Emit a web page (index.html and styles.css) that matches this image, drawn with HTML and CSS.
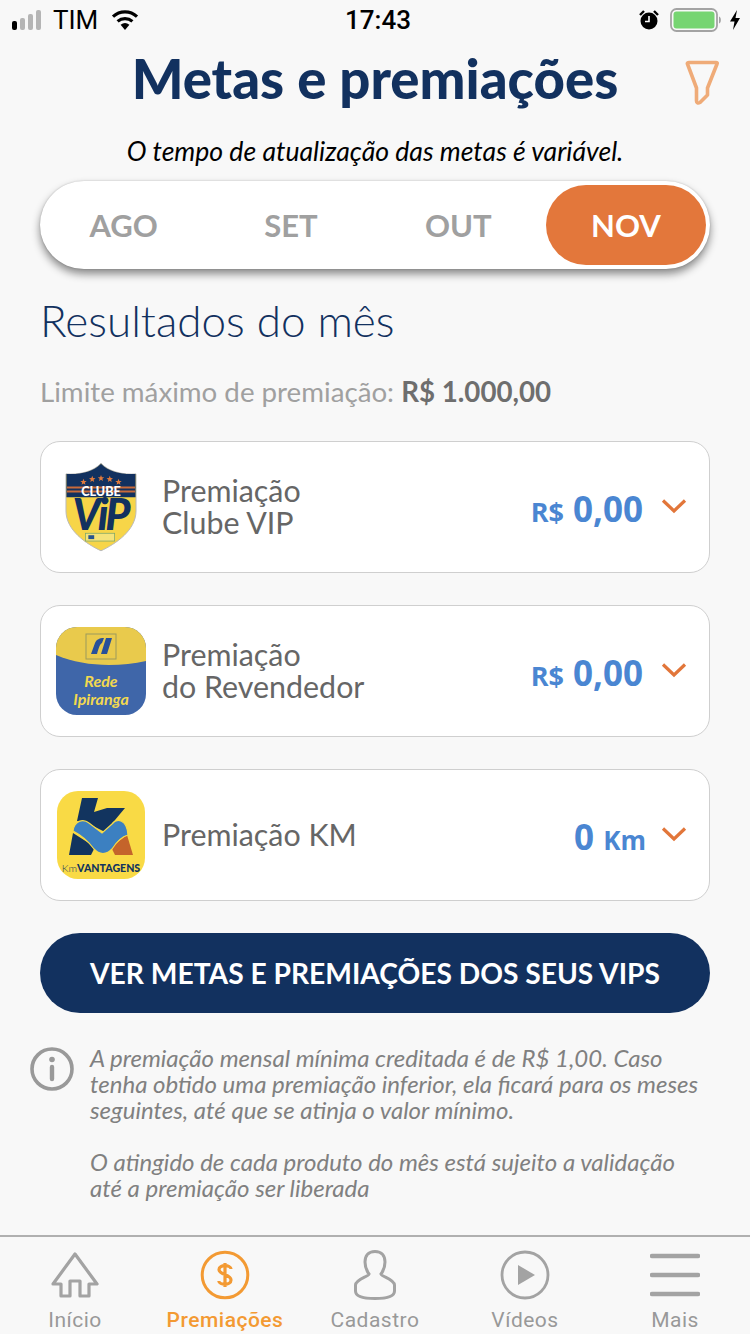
FILE: index.html
```html
<!DOCTYPE html>
<html lang="pt-BR">
<head>
    <meta charset="UTF-8">
    <meta name="viewport" content="width=device-width, initial-scale=1.0">
    <title>Metas e premiações</title>
    <link rel="stylesheet" href="styles.css">
</head>
<body>
    <div class="screen">
        <!-- Barra de status -->
        <div class="status-bar">
            <div class="status-left">
                <span class="signal"><i class="on"></i><i></i><i></i><i></i></span>
                <span class="carrier">TIM</span>
                <svg class="wifi" width="28" height="22" viewBox="0 0 28 22">
                    <path d="M14 21 L9.6 15.8 A7 7 0 0 1 18.4 15.8 Z" fill="#000"/>
                    <path d="M6.6 12.4 A11.4 11.4 0 0 1 21.4 12.4" fill="none" stroke="#000" stroke-width="3.2"/>
                    <path d="M2 7.6 A17.6 17.6 0 0 1 26 7.6" fill="none" stroke="#000" stroke-width="3.2"/>
                </svg>
            </div>
            <div class="status-time">17:43</div>
            <div class="status-right">
                <svg width="20" height="22" viewBox="0 0 20 22">
                    <circle cx="10" cy="12" r="8.5" fill="#000"/>
                    <path d="M10 7 V12.5 H6" fill="none" stroke="#fff" stroke-width="1.6"/>
                    <path d="M1 6 L5 2 M19 6 L15 2" stroke="#000" stroke-width="2.4"/>
                </svg>
                <svg class="battery" width="52" height="24" viewBox="0 0 52 24">
                    <rect x="1" y="1" width="46" height="22" rx="5.500" fill="none" stroke="#a3a3a3" stroke-width="1.800"/>
                    <rect x="3.500" y="3.500" width="41" height="17" rx="3" fill="#76d572"/>
                    <path d="M49 8.500 C51.500 9 51.500 15 49 15.500 Z" fill="#a3a3a3"/>
                </svg>
                <svg class="bolt" width="12" height="20" viewBox="0 0 12 20">
                    <path d="M8 0 L1 11.500 H5.500 L4 20 L11 8 H6.500 Z" fill="#000"/>
                </svg>
            </div>
        </div>

        <div class="content">
            <div class="page-head">
                <h1>Metas e premiações</h1>
                <svg class="filter-icon" width="34" height="46" viewBox="0 0 34 46">
                    <path d="M2.500 4 C2 3 3 2.500 4 2.500 H31 C32 2.500 32.500 3 32 4 L22.500 28 V35 L15 42.500 C13 43.500 11.500 43 11.500 41 V28 Z" fill="none" stroke="#efab78" stroke-width="3.600" stroke-linejoin="round"/>
                </svg>
            </div>
            <p class="notice">O tempo de atualização das metas é variável.</p>

            <!-- Seletor de mês -->
            <div class="months">
                <div class="month">AGO</div>
                <div class="month">SET</div>
                <div class="month">OUT</div>
                <div class="month active">NOV</div>
            </div>

            <h2>Resultados do mês</h2>
            <p class="limit">Limite máximo de premiação: <b>R$ 1.000,00</b></p>

            <div class="card">
                <div class="card-logo">
                    <svg width="72" height="92" viewBox="0 0 74 92">
                        <path d="M1 12 C14 13 29 10 37 1 C45 10 60 13 73 12 V50 C73 70 52 84 37 91 C22 84 1 70 1 50 Z" fill="#f7d548" stroke="#b9b9b9" stroke-width="1"/>
                        <path d="M1.500 12 C14 13 29 10 37 1.500 C45 10 60 13 72.500 12 V36 H1.500 Z" fill="#12315f"/>
                        <path d="M2 26 H72 M2 30 H72" stroke="#c86a3a" stroke-width="2"/>
                        <g fill="#e17a3c">
                            <path id="star" d="M19 17 L19.900 19.300 L22.300 19.400 L20.400 20.900 L21 23.200 L19 21.900 L17 23.200 L17.600 20.900 L15.700 19.400 L18.100 19.300 Z"/>
                            <use href="#star" x="9" y="-3"/>
                            <use href="#star" x="18" y="-4"/>
                            <use href="#star" x="27" y="-3"/>
                            <use href="#star" x="36" y="0"/>
                        </g>
                        <text x="37" y="35" class="logo-clube">CLUBE</text>
                        <text x="36" y="70" class="logo-vip">ViP</text>
                        <rect x="21" y="73" width="30" height="8" fill="#f5e37a" stroke="#7fa86a" stroke-width="0.800"/>
                        <rect x="24" y="75" width="6" height="4" fill="#27548f"/>
                    </svg>
                </div>
                <div class="card-title">Premiação<br>Clube VIP</div>
                <div class="card-value"><small>R$</small> 0,00</div>
                <svg class="chevron" width="26" height="16" viewBox="0 0 26 16"><path d="M2 2.500 L13 13 L24 2.500" fill="none" stroke="#e2763a" stroke-width="3.200"/></svg>
            </div>

            <div class="card">
                <div class="card-logo">
                    <svg width="90" height="88" viewBox="0 0 90 88">
                        <rect width="90" height="88" rx="21" fill="#3f66a9"/>
                        <path d="M0 28 V21 A21 21 0 0 1 21 0 H69 A21 21 0 0 1 90 21 V34 C62 40 28 40 0 28 Z" fill="#e9ca4c"/>
                        <rect x="30" y="7" width="30" height="25" fill="none" stroke="#9c9a5c" stroke-width="1"/>
                        <path d="M35 27 L39 16 C40 13 43 11 48 11 L46 16 C44 17 43 20 41 27 Z M45 27 L50 11 H56 L51 27 Z" fill="#27509a"/>
                        <text x="45" y="60" class="logo-rede">Rede</text>
                        <text x="45" y="78" class="logo-rede">Ipiranga</text>
                    </svg>
                </div>
                <div class="card-title">Premiação<br>do Revendedor</div>
                <div class="card-value"><small>R$</small> 0,00</div>
                <svg class="chevron" width="26" height="16" viewBox="0 0 26 16"><path d="M2 2.500 L13 13 L24 2.500" fill="none" stroke="#e2763a" stroke-width="3.200"/></svg>
            </div>

            <div class="card">
                <div class="card-logo">
                    <svg width="88" height="88" viewBox="0 0 88 88">
                        <rect width="88" height="88" rx="21" fill="#f9da45"/>
                        <path d="M25 7 H41 L37 21 L50 17 H68 L48 41 L30 32 L20 30 Z M16 42 L12 64 H34 L38 56 Z" fill="#12345f"/>
                        <path d="M70 44 L76 64 H58 L54 56 Z" fill="#c4642b"/>
                        <path d="M16 40 C17 30 26 27 32 32 L45 42 L55 33 C60 27 70 28 71 44 C64 46 60 50 55 58 C50 64 42 64 37 58 C31 50 24 44 16 40 Z" fill="#3c80c1" stroke="#f9da45" stroke-width="1.200"/>
                        <text x="44" y="81" class="logo-km"><tspan class="logo-km-thin">Km</tspan>VANTAGENS</text>
                    </svg>
                </div>
                <div class="card-title">Premiação KM</div>
                <div class="card-value km-value"><span>0</span> <small>Km</small></div>
                <svg class="chevron" width="26" height="16" viewBox="0 0 26 16"><path d="M2 2.500 L13 13 L24 2.500" fill="none" stroke="#e2763a" stroke-width="3.200"/></svg>
            </div>

            <div class="vip-button">VER METAS E PREMIAÇÕES DOS SEUS VIPS</div>

            <div class="info">
                <svg class="info-icon" width="44" height="44" viewBox="0 0 44 44">
                    <circle cx="22" cy="22" r="20" fill="none" stroke="#999" stroke-width="3.600"/>
                    <circle cx="22" cy="12.500" r="2.800" fill="#999"/>
                    <path d="M22 20 V32" stroke="#999" stroke-width="4.400" stroke-linecap="round"/>
                </svg>
                <div class="info-text">
                    <p>A premiação mensal mínima creditada é de R$ 1,00. Caso<br>tenha obtido uma premiação inferior, ela ficará para os meses<br>seguintes, até que se atinja o valor mínimo.</p>
                    <p>O atingido de cada produto do mês está sujeito a validação<br>até a premiação ser liberada</p>
                </div>
            </div>
        </div>

        <!-- Menu inferior -->
        <div class="tabbar">
            <div class="tab">
                <svg width="50" height="46" viewBox="0 0 50 46"><path d="M25 2 L47 32 H39 V44 H30 V29 H20 V44 H11 V32 H3 Z" fill="none" stroke="#a3a3a3" stroke-width="3.200" stroke-linejoin="round"/></svg>
                <span>Início</span>
            </div>
            <div class="tab active">
                <svg width="50" height="50" viewBox="0 0 50 50">
                    <circle cx="25" cy="25" r="22.800" fill="none" stroke="#f39a33" stroke-width="3"/>
                    <path d="M31 19 C31 15 19 14 19 19.500 C19 25 31 24 31 30 C31 36 19 35 18.800 31 M25 13 V37" fill="none" stroke="#f39a33" stroke-width="3.200"/>
                </svg>
                <span>Premiações</span>
            </div>
            <div class="tab">
                <svg width="44" height="50" viewBox="0 0 44 50">
                    <path d="M22 1.500 C29 1.500 32 6 32 12 C32 17 31 20 28 24 C29 27 41 29 41.500 35 V41 C41.500 46 35 48.500 22 48.500 C9 48.500 2.500 46 2.500 41 V35 C3 29 15 27 16 24 C13 20 12 17 12 12 C12 6 15 1.500 22 1.500 Z" fill="none" stroke="#a3a3a3" stroke-width="3"/>
                </svg>
                <span>Cadastro</span>
            </div>
            <div class="tab">
                <svg width="50" height="50" viewBox="0 0 50 50">
                    <circle cx="25" cy="25" r="23" fill="none" stroke="#a3a3a3" stroke-width="2.800"/>
                    <path d="M18 15 L35 25 L18 35 Z" fill="#a3a3a3"/>
                </svg>
                <span>Vídeos</span>
            </div>
            <div class="tab">
                <svg width="50" height="46" viewBox="0 0 50 46">
                    <path d="M2 4 H48 M2 23 H48 M2 42 H48" stroke="#a3a3a3" stroke-width="4.400" stroke-linecap="round"/>
                </svg>
                <span>Mais</span>
            </div>
        </div>
    </div>
</body>
</html>
```

FILE: styles.css
```css
body {
    margin: 0;
    background-color: #f8f8f8;
    font-family: Lato, "Open Sans", sans-serif;
}

.screen {
    width: 750px;
    height: 1334px;
    display: flex;
    flex-direction: column;
    overflow: hidden;
}

/* Barra de status */
.status-bar {
    height: 40px;
    flex: none;
    display: grid;
    grid-template-columns: 1fr auto 1fr;
    align-items: center;
    padding: 0 9px 0 12px;
    font-family: Roboto, sans-serif;
    font-size: 26px;
    color: #000;
}

.status-left {
    display: flex;
    align-items: center;
}

.status-right {
    display: flex;
    align-items: center;
    justify-content: flex-end;
}

.status-time {
    font-weight: 500;
    margin-left: 3px;
}

.signal {
    display: flex;
    align-items: flex-end;
    gap: 3px;
    height: 20px;
}

.signal i {
    width: 5px;
    background-color: #b5b5b5;
    border-radius: 2px;
    height: 20px;
}

.signal i.on {
    height: 9px;
    background-color: #000;
}

.signal i:nth-child(2) {
    height: 12px;
}

.signal i:nth-child(3) {
    height: 16px;
}

.carrier {
    margin-left: 12px;
}

.wifi {
    margin-left: 13px;
}

.battery {
    margin-left: 11px;
}

.bolt {
    margin-left: 7px;
}

/* Conteudo */
.content {
    flex: 1;
    padding: 0 40px;
}

.page-head {
    position: relative;
    height: 78px;
    box-sizing: border-box;
    padding-bottom: 3px;
    display: flex;
    justify-content: center;
    align-items: center;
}

h1 {
    margin: 0;
    font-size: 54.500px;
    font-weight: 900;
    color: #12315f;
}

.filter-icon {
    position: absolute;
    right: -9px;
    top: 20px;
}

.notice {
    margin: 18px 0 0;
    height: 30px;
    line-height: 30px;
    text-align: center;
    font-size: 26.600px;
    font-style: italic;
    color: #000;
}

.months {
    margin-top: 15px;
    height: 88px;
    box-sizing: border-box;
    padding: 4px 0;
    display: flex;
    background-color: #fff;
    border-radius: 44px;
    box-shadow: 0 5px 8px rgba(0, 0, 0, 0.45), 0 0 2px rgba(0, 0, 0, 0.2);
}

.month {
    flex: 1;
    display: flex;
    align-items: center;
    justify-content: center;
    border-radius: 40px;
    font-size: 31px;
    font-weight: 700;
    color: #a0a0a0;
}

.month.active {
    flex: none;
    width: 160px;
    margin: 0 4px;
    background-color: #e3773b;
    color: #fff;
}

h2 {
    margin: 26px 0 0;
    height: 50px;
    line-height: 50px;
    font-size: 44px;
    font-weight: 300;
    color: #12315f;
}

.limit {
    margin: 32px 0 0;
    height: 30px;
    line-height: 30px;
    font-size: 27.700px;
    color: #a0a0a0;
}

.limit b {
    color: #6e6e6e;
}

/* Tarjetas de premiacao */
.card {
    height: 132px;
    box-sizing: border-box;
    margin-top: 32px;
    padding-right: 22px;
    display: flex;
    align-items: center;
    background-color: #fff;
    border: 1px solid #cfcfcf;
    border-radius: 20px;
}

.limit + .card {
    margin-top: 34px;
}

.card-logo {
    width: 120px;
    flex: none;
    margin-right: 1px;
    display: flex;
    justify-content: center;
}

.card-logo svg {
    display: block;
}

.card-title {
    flex: 1;
    margin-top: -2px;
    font-size: 30.400px;
    line-height: 32px;
    color: #666;
}

.card-value {
    font-family: "Open Sans", sans-serif;
    font-size: 35px;
    font-weight: 700;
    color: #4a86d2;
    margin-top: 2px;
}

.card-value small {
    font-size: 27px;
}

.km-value {
    margin-right: -3px;
}

.km-value small {
    font-size: 26px;
}

.chevron {
    margin-left: 18px;
    margin-top: -2px;
}

.logo-clube {
    font-size: 13px;
    font-weight: 900;
    fill: #fff;
    text-anchor: middle;
}

.logo-vip {
    font-size: 44px;
    font-weight: 900;
    font-style: italic;
    letter-spacing: -3px;
    fill: #12315f;
    text-anchor: middle;
}

.logo-rede {
    font-size: 16px;
    font-weight: 700;
    font-style: italic;
    fill: #f3d94f;
    text-anchor: middle;
}

.logo-km {
    font-size: 10.600px;
    font-weight: 900;
    fill: #12345f;
    text-anchor: middle;
}

.logo-km-thin {
    font-weight: 300;
}

.vip-button {
    margin-top: 32px;
    height: 80px;
    display: flex;
    align-items: center;
    justify-content: center;
    background-color: #12315f;
    border-radius: 40px;
    font-size: 28.200px;
    font-weight: 700;
    color: #fff;
}

/* Aviso */
.info {
    margin: 32px -10px 0 -10px;
    display: flex;
    gap: 16px;
}

.info-icon {
    flex: none;
    margin-top: 2px;
}

.info-text {
    font-size: 24px;
    line-height: 26px;
    font-style: italic;
    color: #808080;
    white-space: nowrap;
}

.info-text p {
    margin: 0 0 26px;
}

/* Menu inferior */
.tabbar {
    height: 99px;
    flex: none;
    box-sizing: border-box;
    border-top: 2px solid #b0b0b0;
    display: flex;
}

.tab {
    width: 150px;
    display: flex;
    flex-direction: column;
    align-items: center;
    padding-top: 13px;
    box-sizing: border-box;
    font-family: Roboto, sans-serif;
    font-size: 21px;
    letter-spacing: 0.500px;
    color: #999;
}

.tab svg {
    height: 50px;
    display: block;
}

.tab span {
    margin-top: 8px;
}

.tab.active {
    color: #f39a33;
    font-weight: 500;
}
```
